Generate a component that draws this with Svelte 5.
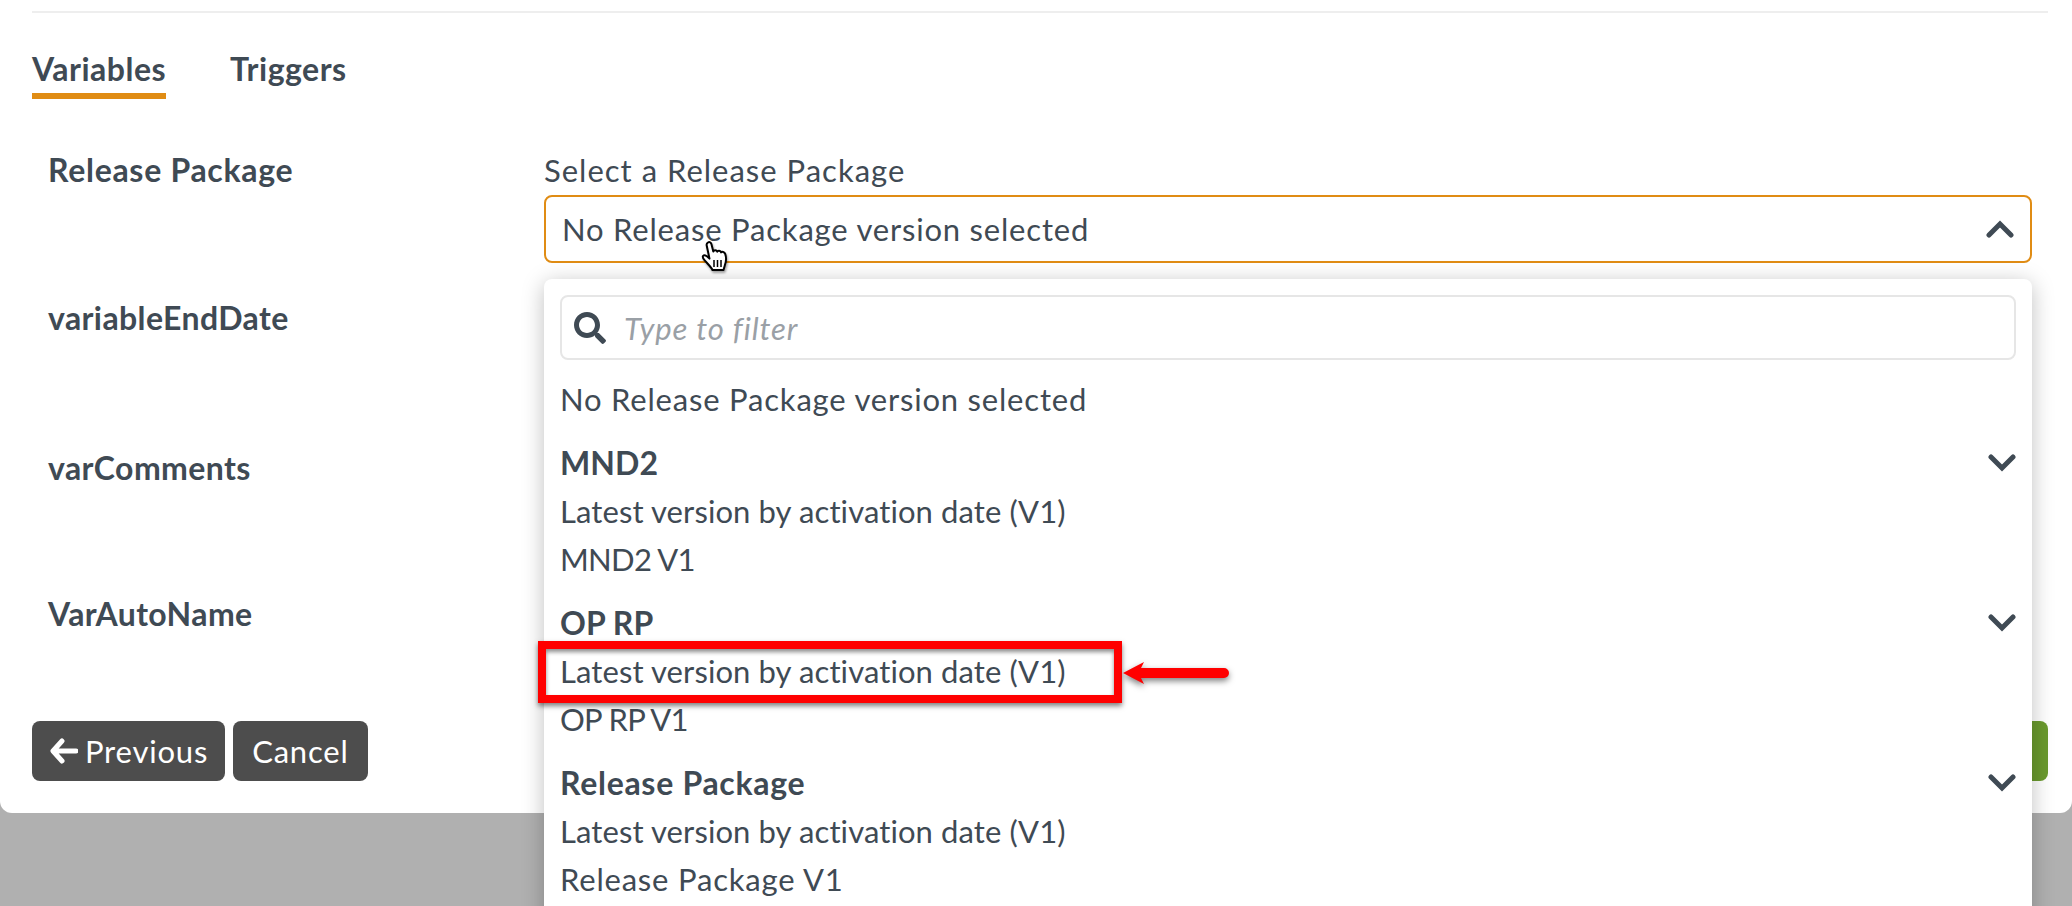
<script>
	const groups = [
		{
			name: 'MND2',
			items: [
				{ text: 'Latest version by activation date (V1)' },
				{ text: 'MND2 V1', spacing: 'tight' }
			]
		},
		{
			name: 'OP RP',
			items: [
				{ text: 'Latest version by activation date (V1)' },
				{ text: 'OP RP V1', spacing: 'tight' }
			]
		},
		{
			name: 'Release Package',
			wide: true,
			items: [
				{ text: 'Latest version by activation date (V1)' },
				{ text: 'Release Package V1', spacing: 'wide' }
			]
		}
	];
</script>

<div class="page">
	<div class="card">
		<div class="rule"></div>

		<div class="tabs">
			<span class="tab active">Variables</span>
			<span class="tab">Triggers</span>
		</div>

		<div class="rows">
			<div class="row first">
				<div class="label wide-bold">Release Package</div>
				<div class="field">
					<div class="field-label wide">Select a Release Package</div>
					<div class="select">
						<span class="wide">No Release Package version selected</span>
						<svg class="chev-up" viewBox="0 0 28 18" width="28" height="18">
							<path d="M3 15 L14 4 L25 15" fill="none" stroke="#3f4a54" stroke-width="5" stroke-linecap="round" stroke-linejoin="miter" />
						</svg>
						<!-- mouse pointer from the capture -->
						<svg class="cursor" viewBox="0 0 30 33" width="30" height="33">
							<path
								d="M8 2.5c1.600-1 3 0 3.400 1.600l1.900 7.400c.4-1.800 3.400-1.900 4 .2.6-1.400 3.200-1.200 3.800.7.8-1 3.400-.6 4.100 1.400 1.200 3.600 1.200 7.600-.4 11.600l-1.300 4.600H12.500c-1.300-3-4.300-5.600-7.800-9.600-1.700-2-2.500-3.500-1.600-4.500 1.200-1.200 3.500-.2 6.400 2.700L6.700 5.500C6.400 4.300 6.900 3.200 8 2.500z"
								fill="#fff"
								stroke="#000"
								stroke-width="2"
								stroke-linejoin="round"
							/>
							<path d="M14 20v7M17.500 20v7M21 20v7" stroke="#000" stroke-width="1.500" fill="none" />
						</svg>
					</div>

					<div class="dropdown">
						<div class="filter">
							<svg class="search" viewBox="0 0 512 512" width="32" height="32">
								<path
									fill="#3f4a54"
									d="M505 442.700L405.300 343c-4.500-4.500-10.600-7-17-7H372c27.600-35.300 44-79.700 44-128C416 93.100 322.900 0 208 0S0 93.100 0 208s93.100 208 208 208c48.300 0 92.700-16.400 128-44v16.300c0 6.400 2.500 12.500 7 17l99.700 99.700c9.400 9.400 24.600 9.400 33.900 0l28.300-28.300c9.400-9.400 9.400-24.600.1-34zM208 336c-70.700 0-128-57.200-128-128 0-70.700 57.200-128 128-128 70.700 0 128 57.200 128 128 0 70.700-57.200 128-128 128z"
								/>
							</svg>
							<span class="placeholder">Type to filter</span>
						</div>
						<div class="item wide">No Release Package version selected</div>
						{#each groups as group}
							<div class="group">
								<div class="group-title">
									<span class:wide-bold={group.wide}>{group.name}</span>
									<svg viewBox="0 0 28 18" width="28" height="18">
										<path d="M3 3 L14 14 L25 3" fill="none" stroke="#3f4a54" stroke-width="5" stroke-linecap="round" />
									</svg>
								</div>
								{#each group.items as item}
									<div class="item {item.spacing ?? ''}">{item.text}</div>
								{/each}
							</div>
						{/each}
					</div>
				</div>
			</div>
			<div class="row second"><div class="label">variableEndDate</div></div>
			<div class="row third"><div class="label">varComments</div></div>
			<div class="row"><div class="label">VarAutoName</div></div>
		</div>

		<div class="actions">
			<div class="left-actions">
				<button class="btn prev">
					<svg viewBox="0 0 28 26" width="28" height="26">
						<path d="M12 3 L3 13 L12 23 M4 13 H26" fill="none" stroke="#fff" stroke-width="5" stroke-linecap="round" stroke-linejoin="round" />
					</svg>
					Previous
				</button>
				<button class="btn">Cancel</button>
			</div>
			<button class="btn next">Next</button>
		</div>
	</div>

	<!-- annotation drawn over the capture -->
	<div class="callout"></div>
	<svg class="arrow" viewBox="0 0 112 36" width="112" height="36">
		<path d="M3 16 L24 5 L21 11 H104 a5 5 0 0 1 0 10 H21 L24 27 Z" fill="#f00" />
	</svg>
</div>

<style>
	:global(body) {
		margin: 0;
		background: #b0b0b0;
	}

	.page {
		position: relative;
		height: 906px;
		overflow: hidden;
		font-family: 'Lato', sans-serif;
		font-size: 31px;
		letter-spacing: 0.1px;
		color: #3f4a54;
	}

	.wide {
		letter-spacing: 0.8px;
	}

	.tight {
		letter-spacing: -0.7px;
	}

	.card {
		height: 813px;
		box-sizing: border-box;
		padding: 11px 24px 0 32px;
		background: #fff;
		border-radius: 0 0 12px 12px;
		display: flex;
		flex-direction: column;
	}

	.rule {
		height: 2px;
		background: #eeeeee;
	}

	.tabs {
		display: flex;
		gap: 64px;
		margin-top: 36px;
		height: 50px;
	}

	.tab {
		font-size: 32px;
		letter-spacing: 0.5px;
		font-weight: 700;
		line-height: 40px;
		height: 50px;
		box-sizing: border-box;
	}

	.tab.active {
		border-bottom: 6px solid #e08c14;
	}

	.rows {
		padding: 0 0 0 16px;
		margin-top: 49px;
		flex: 1;
		min-height: 0;
	}

	.row {
		display: flex;
		height: 145px;
	}

	.row.first {
		height: 148px;
	}

	.row.second {
		height: 150px;
	}

	.row.third {
		height: 146px;
	}

	.label {
		width: 496px;
		font-size: 32px;
		letter-spacing: 0.4px;
		font-weight: 700;
		line-height: 44px;
	}

	.label.wide-bold,
	.wide-bold {
		letter-spacing: 0.7px;
	}

	.field {
		position: relative;
		flex: none;
		width: 1488px;
	}

	.field-label {
		line-height: 44px;
		letter-spacing: 1px;
	}

	.select {
		position: relative;
		box-sizing: border-box;
		height: 68px;
		margin-top: 3px;
		padding: 0 16px;
		border: 2px solid #e08c14;
		border-radius: 8px;
		display: flex;
		align-items: center;
		justify-content: space-between;
		background: #fff;
	}

	.cursor {
		position: absolute;
		left: 154px;
		top: 43px;
		z-index: 3;
		filter: drop-shadow(1px 2px 1px rgba(0, 0, 0, 0.35));
	}

	.dropdown {
		position: absolute;
		z-index: 2;
		top: 131px;
		left: 0;
		right: 0;
		padding: 16px 16px 60px;
		background: #fff;
		border-radius: 8px;
		box-shadow: 0 4px 22px rgba(0, 0, 0, 0.25);
	}

	.filter {
		box-sizing: border-box;
		height: 65px;
		margin-bottom: 15px;
		padding: 0 12px;
		border: 2px solid #e6e6e6;
		border-radius: 8px;
		display: flex;
		align-items: center;
		gap: 18px;
	}

	.placeholder {
		font-style: italic;
		color: #9aa0a6;
		letter-spacing: 0.9px;
	}

	.item {
		height: 48px;
		line-height: 48px;
		white-space: nowrap;
	}

	.group {
		margin-top: 16px;
		margin-bottom: 1px;
	}

	.group-title {
		height: 48px;
		line-height: 48px;
		font-size: 32px;
		letter-spacing: 0.1px;
		font-weight: 700;
		display: flex;
		align-items: center;
		justify-content: space-between;
	}

	.actions {
		display: flex;
		justify-content: space-between;
		margin-bottom: 32px;
	}

	.left-actions {
		display: flex;
		gap: 8px;
	}

	.btn {
		height: 60px;
		padding: 0 19px;
		border: none;
		border-radius: 8px;
		background: #4d4d4d;
		color: #fff;
		font: inherit;
		letter-spacing: 0.8px;
		display: flex;
		align-items: center;
		gap: 9px;
	}

	.btn.prev {
		padding: 0 17px 0 18px;
		gap: 7px;
	}

	.btn.next {
		background: #6a9a2e;
	}

	.callout {
		position: absolute;
		z-index: 4;
		left: 538px;
		top: 641px;
		width: 584px;
		height: 62px;
		box-sizing: border-box;
		border: 8px solid #f00;
		box-shadow:
			0 3px 5px rgba(0, 0, 0, 0.5),
			inset 0 3px 4px rgba(0, 0, 0, 0.45);
	}

	.arrow {
		position: absolute;
		z-index: 4;
		left: 1120px;
		top: 657px;
		filter: drop-shadow(0 3px 3px rgba(0, 0, 0, 0.5));
	}
</style>
